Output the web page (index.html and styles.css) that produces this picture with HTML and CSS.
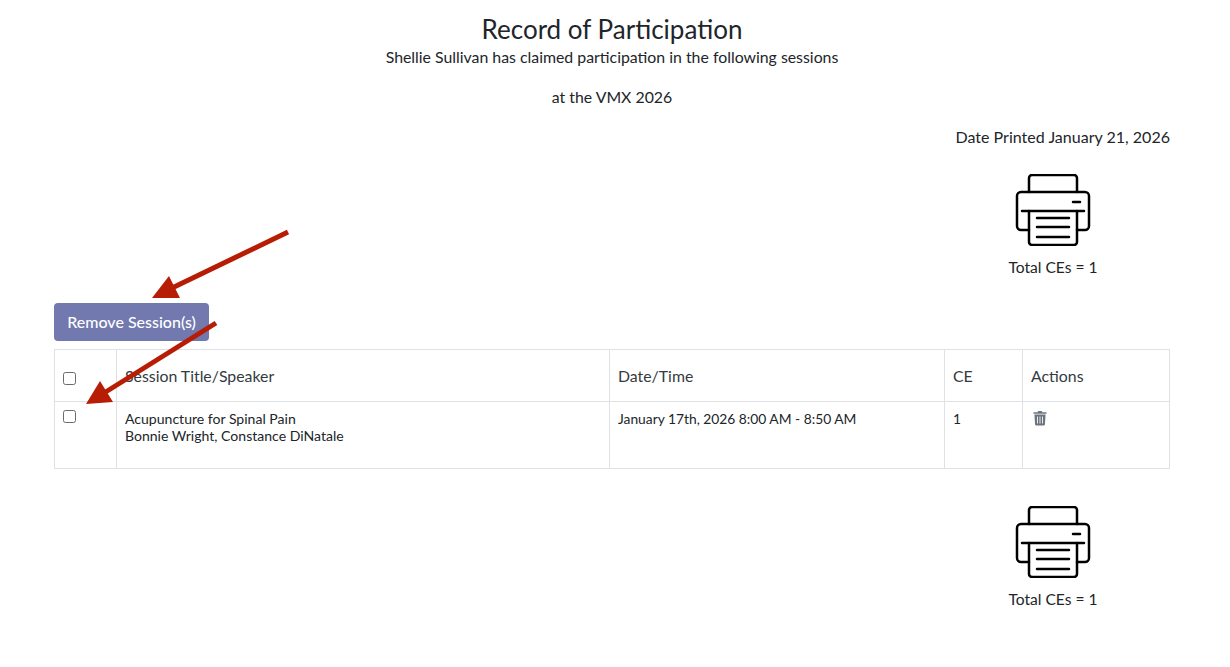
FILE: index.html
```html
<!DOCTYPE html>
<html lang="en">
<head>
<meta charset="utf-8">
<title>Record of Participation</title>
<link rel="stylesheet" href="styles.css">
</head>
<body>
<svg width="0" height="0" class="defs" aria-hidden="true">
  <symbol id="printer" viewBox="0 0 76 72">
    <path d="M14 18V4a3 3 0 0 1 3-3h42a3 3 0 0 1 3 3v14" />
    <path d="M14 56H6a4 4 0 0 1-4-4V22a4 4 0 0 1 4-4h64a4 4 0 0 1 4 4v30a4 4 0 0 1-4 4h-8" />
    <path d="M7 37h62" />
    <path d="M14 37v31a3 3 0 0 0 3 3h42a3 3 0 0 0 3-3V37" />
    <path d="M22 44h32M22 53h32M22 63h32" />
    <path d="M58 28h7" />
  </symbol>
</svg>
<main class="page">
  <header class="head">
    <h1 class="title">Record of Participation</h1>
    <p class="sub">Shellie Sullivan has claimed participation in the following sessions</p>
    <p class="sub event">at the VMX 2026</p>
  </header>
  <p class="printed">Date Printed January 21, 2026</p>
  <div class="print-block first">
    <svg class="printer"><use href="#printer"/></svg>
    <div class="total">Total CEs = 1</div>
  </div>
  <button class="remove" type="button">Remove Session(s)</button>
  <table class="sessions">
    <thead>
      <tr>
        <th class="c-check"><input type="checkbox" class="check head-check"></th>
        <th class="c-title">Session Title/Speaker</th>
        <th class="c-date">Date/Time</th>
        <th class="c-ce">CE</th>
        <th>Actions</th>
      </tr>
    </thead>
    <tbody>
      <tr>
        <td><input type="checkbox" class="check"></td>
        <td class="session">Acupuncture for Spinal Pain<br>Bonnie Wright, Constance DiNatale</td>
        <td>January 17th, 2026 8:00 AM - 8:50 AM</td>
        <td>1</td>
        <td>
          <svg class="trash" viewBox="0 0 14 16"><path d="M1 2.2h3.6L5.2 1h3.6l.6 1.2H13c.4 0 .6.3.6.6v.9H.4v-.9c0-.3.2-.6.6-.6zM1.4 4.6h11.2l-.7 10c0 .5-.5.9-1 .9H3.100c-.5 0-1-.4-1-.9z" /><path class="slot" d="M4.500 6.500v7M7 6.500v7M9.500 6.500v7"/></svg>
        </td>
      </tr>
    </tbody>
  </table>
  <div class="print-block last">
    <svg class="printer"><use href="#printer"/></svg>
    <div class="total">Total CEs = 1</div>
  </div>
</main>
<svg class="arrows" viewBox="0 0 1230 667" aria-hidden="true">
  <path class="shaft" d="M288 232L172 288"/>
  <path class="head-a" d="M152 298L169 276L180 298Z"/>
  <path class="shaft" d="M216 323L104 393"/>
  <path class="head-a" d="M86 404L100 381L113 402Z"/>
</svg>
</body>
</html>
```
FILE: styles.css
```css
* { box-sizing: border-box; }
html, body { margin: 0; padding: 0; background: #fff; }
body {
  font-family: Lato, "Liberation Sans", sans-serif;
  color: #212529;
  font-size: 15px;
  line-height: 1.2;
  position: relative;
  height: 667px;
  overflow: hidden;
}
.defs { position: absolute; }
.page { width: 1116px; margin-left: 54px; padding-top: 14px; }
.head { text-align: center; }
.title { margin: 0 0 2px; font-size: 26px; font-weight: 400; line-height: 30px; }
.sub { margin: 0; font-size: 15.85px; line-height: 22px; }
.event { margin-top: 18px; }
.printed { margin: 18px 0 0; text-align: right; font-size: 16.05px; line-height: 22px; }
.print-block { width: 180px; margin-left: auto; margin-right: 27px; text-align: center; }
.print-block.first { margin-top: 26px; }
.print-block.last { margin-top: 37px; }
.printer {
  display: block; width: 76px; height: 72px; margin: 0 auto;
  fill: none; stroke: #000; stroke-width: 2.5; stroke-linecap: round; stroke-linejoin: round;
  overflow: visible;
}
.total { margin-top: 11px; font-size: 15.6px; line-height: 20px; }
.remove {
  display: block;
  margin-top: 26px;
  width: 155px; height: 38px;
  padding: 0;
  border: 0; border-radius: 4px;
  background: #7179af;
  color: #fff;
  font: 500 16px/38px Lato, "Liberation Sans", sans-serif;
}
.sessions {
  margin-top: 8px;
  width: 1116px;
  border-collapse: collapse;
  table-layout: fixed;
  border: 1px solid #dee2e6;
}
.sessions th, .sessions td {
  border: 1px solid #dee2e6;
  text-align: left;
  vertical-align: top;
  padding: 8px 8px 8px;
  font-size: 13.8px;
  line-height: 17px;
}
.sessions .session { font-size: 14.05px; }
.sessions th { font-weight: 400; font-size: 15.85px; line-height: 22px; padding: 15px 8px 14px; vertical-align: bottom; color: #343a40; }
.sessions tbody tr { height: 67px; }
.c-check { width: 62px; }
.c-title { width: 493px; }
.c-date { width: 335px; }
.c-ce { width: 78px; }
.check {
  appearance: none; -webkit-appearance: none;
  display: block;
  width: 13px; height: 13px; margin: 0;
  border: 1px solid #6b6b6b; border-radius: 2.500px; background: #fff;
}
.head-check { margin: 4px 0 2px; }
.trash { display: block; width: 14px; height: 16px; margin: 0 0 0 2px; fill: #6c757d; }
.trash .slot { stroke: #e6e8ea; stroke-width: 1; fill: none; }
.arrows { position: absolute; left: 0; top: 0; width: 1230px; height: 667px; pointer-events: none; }
.shaft { stroke: #b71c05; stroke-width: 5; fill: none; }
.head-a { fill: #b71c05; }
```
